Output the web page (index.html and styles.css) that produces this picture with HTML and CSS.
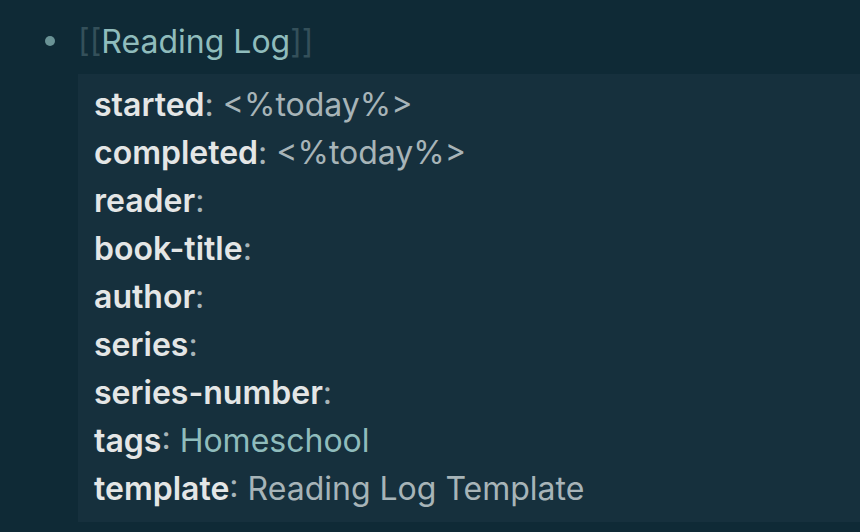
FILE: index.html
```html
<!DOCTYPE html>
<html lang="en">
<head>
  <meta charset="UTF-8">
  <title>Reading Log</title>
  <link rel="stylesheet" href="styles.css">
</head>
<body>
  <div class="list-item">
    <span class="bullet"></span>
    <span class="link"><span class="bracket">[[</span>Reading Log<span class="bracket">]]</span></span>
  </div>
  <div class="properties">
    <div class="prop"><span class="key">started</span><span class="colon">:</span> <span class="value">&lt;%today%&gt;</span></div>
    <div class="prop"><span class="key">completed</span><span class="colon">:</span> <span class="value">&lt;%today%&gt;</span></div>
    <div class="prop"><span class="key">reader</span><span class="colon">:</span></div>
    <div class="prop"><span class="key">book-title</span><span class="colon">:</span></div>
    <div class="prop"><span class="key">author</span><span class="colon">:</span></div>
    <div class="prop"><span class="key">series</span><span class="colon">:</span></div>
    <div class="prop"><span class="key">series-number</span><span class="colon">:</span></div>
    <div class="prop"><span class="key">tags</span><span class="colon">:</span> <span class="value tag">Homeschool</span></div>
    <div class="prop"><span class="key">template</span><span class="colon">:</span> <span class="value">Reading Log Template</span></div>
  </div>
</body>
</html>
```

FILE: styles.css
```css
:root {
  --background: #0f2a36;
  --block: #16303d;
  --text: #e4e6e6;
  --muted: #a7b4b8;
  --accent: #8fbcbc;
}
html, body {
  margin: 0;
  height: 100%;
}
body {
  background-color: var(--background);
  color: var(--text);
  font-family: Inter, "Noto Sans", sans-serif;
  font-size: 32px;
  overflow: hidden;
}
.list-item {
  display: flex;
  align-items: center;
  height: 48px;
  padding: 17px 0 0 45px;
}
.bullet {
  width: 10px;
  height: 10px;
  border-radius: 50%;
  background-color: #6a9396;
  margin-right: 23px;
}
.link {
  color: var(--accent);
}
.bracket {
  color: #34505a;
}
.properties {
  margin: 9px 0 0 78px;
  padding: 7px 16px 9px 16px;
  background-color: var(--block);
}
.prop {
  line-height: 48px;
}
.key {
  font-weight: 600;
}
.colon {
  color: var(--muted);
}
.value {
  color: var(--muted);
}
.value.tag {
  color: var(--accent);
}
```
